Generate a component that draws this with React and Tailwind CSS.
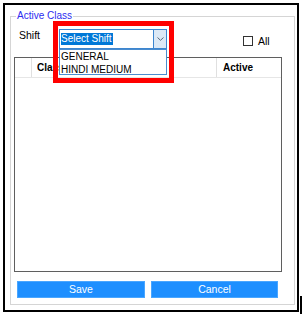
import React from "react";

const ActiveClass = () => {
  return (
    <div className="relative w-[302px] h-[316px] bg-white pt-[3px] pl-[3px] font-['Liberation_Sans',Arial,sans-serif] text-black">
      {/* outer frame */}
      <div className="w-[296px] h-[309px] border-2 border-black pt-[5px] pl-[5px]">
        <fieldset className="w-[285px] h-[295px] border border-[#d5d5d5] pl-[8px]">
          <legend className="ml-[-3px] px-[1px] text-[10px] leading-[12px] text-[#2b2bf0]">
            Active Class
          </legend>

          {/* Shift row */}
          <div className="flex items-start mt-[7px] h-[20px]">
            <span className="w-[40px] text-[10.5px] leading-[12px]">Shift</span>

            <div className="relative flex w-[108px] h-[20px] border border-[#3d86cf] bg-white">
              <div className="flex-1 flex items-start pt-[3px] pl-[1px] text-[10px] leading-[12px]">
                <span className="block bg-[#0078d7] text-white pr-[1px]">Select Shift</span>
              </div>
              <div className="w-[13px] h-full border-l border-[#3d86cf] bg-[#dce9f6] flex items-center justify-center">
                <svg width="7" height="4" viewBox="0 0 7 4">
                  <path d="M0.5 0.5 L3.5 3.3 L6.5 0.5" fill="none" stroke="#5a6a7a" strokeWidth="1" />
                </svg>
              </div>

              {/* open list */}
              <div className="absolute left-[-1px] top-[19px] z-10 w-[108px] h-[26px] border border-[#4a8ccf] bg-white pl-[1px] pt-[1px] text-[10px] leading-[12.5px]">
                <div>GENERAL</div>
                <div>HINDI MEDIUM</div>
              </div>

              {/* red highlight */}
              <div className="absolute left-[-7px] top-[-9px] z-20 w-[121px] h-[62px] border-[5px] border-[#ff0000]" />
            </div>

            <div className="flex items-center ml-[76px] mt-[6px]">
              <span className="w-[10px] h-[10px] border border-[#333]" />
              <span className="ml-[5px] text-[10.5px] leading-[12px]">All</span>
            </div>
          </div>

          {/* grid */}
          <div className="ml-[-5px] mt-[8px] w-[268px] h-[215px] border border-[#5f5f5f] bg-white">
            <div className="flex h-[20px] border-b border-[#e6e6e6] text-[10px] font-bold">
              <div className="w-[17px] border-r border-[#e0e0e0]" />
              <div className="w-[185px] border-r border-[#e0e0e0] flex items-center pl-[5px]">Class</div>
              <div className="flex-1 flex items-center pl-[6px]">Active</div>
            </div>
          </div>

          {/* buttons */}
          <div className="flex gap-[6px] ml-[-2px] mt-[9px]">
            <button className="w-[128px] h-[17px] bg-[#1e8fff] border border-[#4aa6ff] text-white text-[10.5px] leading-[15px]">
              Save
            </button>
            <button className="w-[127px] h-[17px] bg-[#1e8fff] border border-[#4aa6ff] text-white text-[10.5px] leading-[15px]">
              Cancel
            </button>
          </div>
        </fieldset>
      </div>

      {/* stray edge mark */}
      <div className="absolute left-[300px] top-[296px] w-[2px] h-[18px] bg-black" />
    </div>
  );
};

export default function App() {
  return <ActiveClass />;
}
